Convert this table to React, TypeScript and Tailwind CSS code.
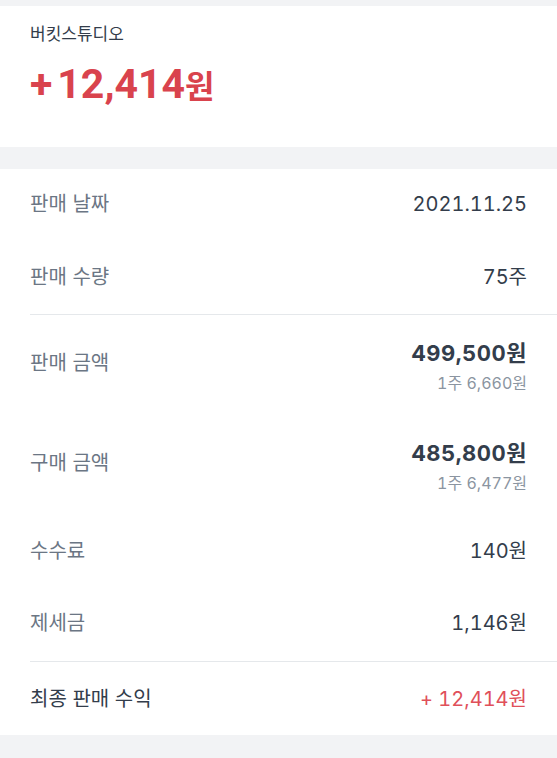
type RowProps = {
  label: string;
  value: string;
  sub?: string;
  h: string;
};

const Row = ({ label, value, sub, h }: RowProps) => (
  <div className={`flex items-center justify-between ${h}`}>
    <span className="text-[20px] text-[#6b7684]">{label}</span>
    {sub ? (
      <div className="mt-[6px] flex flex-col items-end">
        <span className="text-[22px] leading-[28px] font-bold tracking-[0.5px] tabular-nums text-[#333d4b]">
          {value}
        </span>
        <span className="mt-[6px] text-[16px] leading-5 tabular-nums text-[#8b95a1]">{sub}</span>
      </div>
    ) : (
      <span className="text-[20px] tabular-nums text-[#333d4b]">{value}</span>
    )}
  </div>
);

export default function App() {
  return (
    <div className="w-[557px] h-[758px] bg-[#f2f3f5] pt-[6px] font-['Inter','Noto_Sans_CJK_KR',sans-serif]">
      <div className="h-[141px] bg-white px-[30px] pt-[16px]">
        <p className="text-[17px] leading-6 text-[#333d4b]">버킷스튜디오</p>
        <p className="mt-[14px] font-['Roboto','Noto_Sans_CJK_KR',sans-serif] text-[41px] leading-[48px] font-bold text-[#d9434d]">
          <span>+</span>
          <span className="ml-[5px]">12,414</span>
          <span className="text-[32px]">원</span>
        </p>
      </div>
      <div className="mt-[22px] bg-white pl-[30px]">
        <div className="pr-[30px]">
          <Row h="h-[70px]" label="판매 날짜" value="2021.11.25" />
          <Row h="h-[75px]" label="판매 수량" value="75주" />
        </div>
        <div className="h-px bg-[#e5e8eb]" />
        <div className="pr-[30px] pt-[3px]">
          <Row h="h-[90px]" label="판매 금액" value="499,500원" sub="1주 6,660원" />
          <Row h="h-[110px]" label="구매 금액" value="485,800원" sub="1주 6,477원" />
          <Row h="h-[66px]" label="수수료" value="140원" />
          <Row h="h-[77px]" label="제세금" value="1,146원" />
        </div>
        <div className="h-px bg-[#e5e8eb]" />
        <div className="flex h-[73px] items-center justify-between pr-[30px]">
          <span className="text-[20px] text-[#333d4b]">최종 판매 수익</span>
          <span className="text-[20px] tabular-nums text-[#e0505a]">+ 12,414원</span>
        </div>
      </div>
    </div>
  );
}
